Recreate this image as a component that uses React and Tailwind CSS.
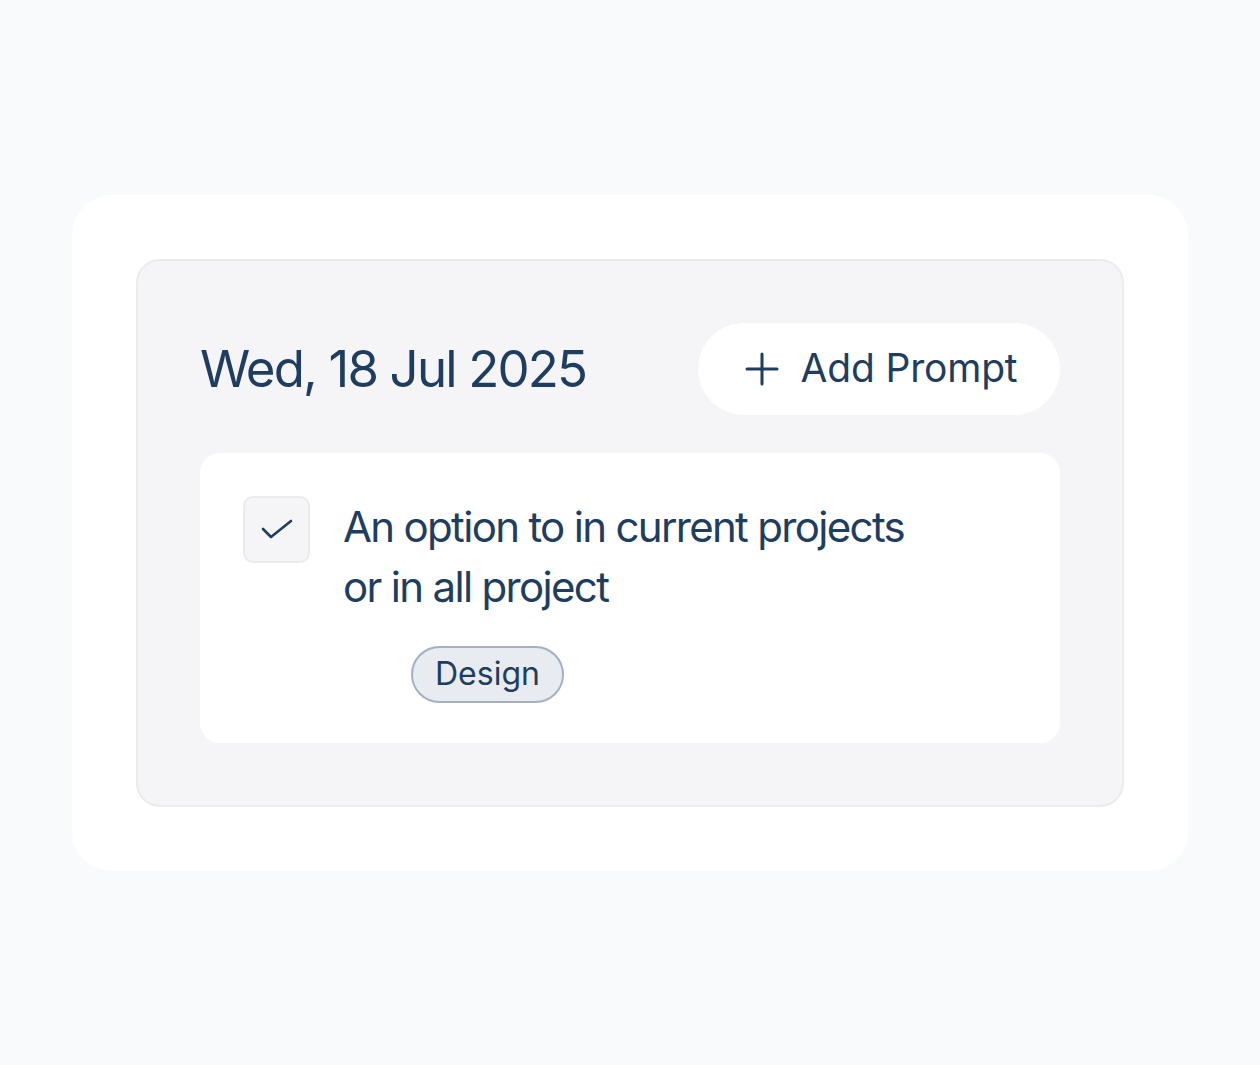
import React from 'react'

const App = () => {
    return (
        <div className="min-h-screen w-full bg-[#f9fafb] flex items-center justify-center font-['Inter',sans-serif] text-[#1f3d5e]">
            <div className="w-[1116px] bg-white rounded-[40px] p-16">
                <div className="bg-[#f5f5f7] border-2 border-[#ebebee] rounded-[24px] p-[62px]">
                    {/* Header */}
                    <div className="flex items-center justify-between">
                        <h1 className="text-[51px] leading-none tracking-[-0.036em] font-normal">Wed, 18 Jul 2025</h1>
                        <button className="h-[92px] w-[362px] bg-white rounded-full flex items-center justify-center gap-[22px] text-[39px] tracking-[-0.005em] pl-1">
                            <svg width="34" height="34" viewBox="0 0 34 34" fill="none" stroke="currentColor" strokeWidth="3" strokeLinecap="round">
                                <path d="M17 2v30M2 17h30" />
                            </svg>
                            <span>Add Prompt</span>
                        </button>
                    </div>

                    {/* Prompt card */}
                    <div className="mt-[38px] bg-white rounded-[20px] pt-[43px] pb-[40px] pl-[43px] pr-10 flex gap-[33px]">
                        <div className="w-[67px] h-[67px] shrink-0 rounded-[10px] border-2 border-[#ebebee] bg-[#f5f5f7] flex items-center justify-center">
                            <svg width="34" height="34" viewBox="0 0 34 34" fill="none" stroke="currentColor" strokeWidth="2.6" strokeLinecap="round" strokeLinejoin="round">
                                <path d="M3 17l8 8L31 9" />
                            </svg>
                        </div>
                        <div className="flex flex-col">
                            <p className="text-[42px] leading-[60px] tracking-[-0.04em] max-w-[580px] mt-[1px]">
                                An option to in current projects or in all project
                            </p>
                            <div className="mt-[29px] ml-[68px]">
                                <span className="inline-flex items-center h-[57px] px-[22px] rounded-full border-2 border-[#a3b1c2] bg-[#e8ecf0] text-[32px]">Design</span>
                            </div>
                        </div>
                    </div>
                </div>
            </div>
        </div>
    )
}

export default App
